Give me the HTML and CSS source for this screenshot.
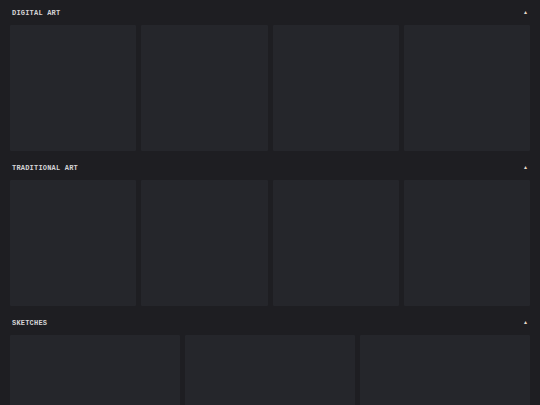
FILE: index.html
```html
<!DOCTYPE html>
<html lang="en">
<head>
  <meta charset="UTF-8">
  <meta name="viewport" content="width=device-width, initial-scale=1.0">
  <title>Gallery</title>
  <link rel="stylesheet" href="styles.css">
</head>
<body>
  <section class="category">
    <div class="category-header">
      <span class="category-title">Digital Art</span>
      <span class="toggle">&#9650;</span>
    </div>
    <div class="grid grid-4">
      <div class="tile"></div>
      <div class="tile"></div>
      <div class="tile"></div>
      <div class="tile"></div>
    </div>
  </section>

  <section class="category">
    <div class="category-header">
      <span class="category-title">Traditional Art</span>
      <span class="toggle">&#9650;</span>
    </div>
    <div class="grid grid-4">
      <div class="tile"></div>
      <div class="tile"></div>
      <div class="tile"></div>
      <div class="tile"></div>
    </div>
  </section>

  <section class="category">
    <div class="category-header">
      <span class="category-title">Sketches</span>
      <span class="toggle">&#9650;</span>
    </div>
    <div class="grid grid-3">
      <div class="tile"></div>
      <div class="tile"></div>
      <div class="tile"></div>
    </div>
  </section>
</body>
</html>
```

FILE: styles.css
```css
body {
  margin: 0;
  background-color: #1e1e22;
  font-family: "Liberation Mono", "Courier New", monospace;
  overflow: hidden;
}

.category-header {
  height: 25px;
  display: flex;
  align-items: center;
  justify-content: space-between;
  padding: 1px 12px 0 12px;
  box-sizing: border-box;
}

.category-title {
  font-size: 7px;
  font-weight: bold;
  letter-spacing: 0.2px;
  text-transform: uppercase;
  color: #d4d4d6;
}

.toggle {
  font-size: 5px;
  color: #e8dccb;
  margin-right: 1px;
}

.grid {
  display: grid;
  gap: 5px;
  padding: 0 10px 4px 10px;
}

.grid-4 {
  grid-template-columns: repeat(4, 1fr);
}

.grid-3 {
  grid-template-columns: repeat(3, 1fr);
}

.tile {
  height: 126px;
  background: #25262b;
  border-radius: 1px;
}
```
